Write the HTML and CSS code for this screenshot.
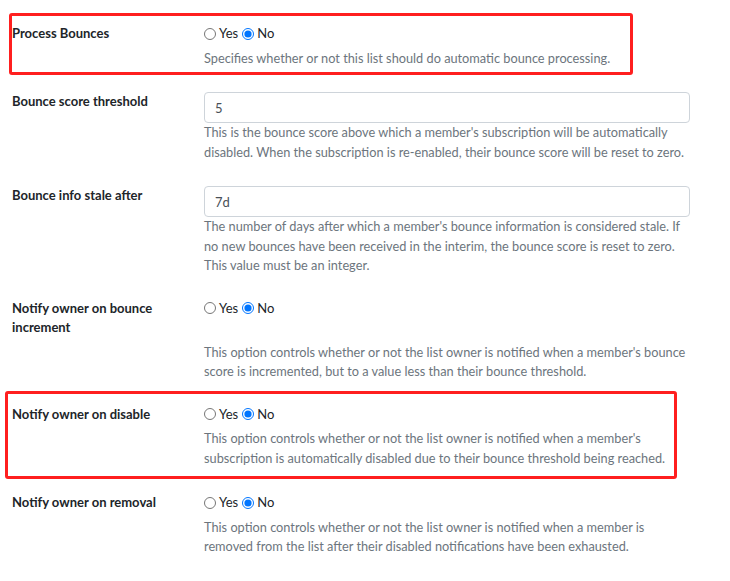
FILE: index.html
```html
<!DOCTYPE html>
<html>
<head>
<meta charset="utf-8">
<link rel="stylesheet" href="styles.css">
</head>
<body>
<div class="form">
  <div class="row">
    <div class="label">Process Bounces</div>
    <div class="control">
      <label class="radio"><input type="radio" name="r1"> Yes</label>
      <label class="radio"><input type="radio" name="r1" checked> No</label>
    </div>
    <div class="help">Specifies whether or not this list should do automatic bounce processing.</div>
    <div class="mark mark1"></div>
  </div>
  <div class="row input-row">
    <div class="label">Bounce score threshold</div>
    <div class="control"><input class="text" type="text" value="5"></div>
    <div class="help tight">This is the bounce score above which a member's subscription will be automatically disabled. When the subscription is re-enabled, their bounce score will be reset to zero.</div>
  </div>
  <div class="row input-row">
    <div class="label">Bounce info stale after</div>
    <div class="control"><input class="text" type="text" value="7d"></div>
    <div class="help tight">The number of days after which a member's bounce information is considered stale. If no new bounces have been received in the interim, the bounce score is reset to zero. This value must be an integer.</div>
  </div>
  <div class="row">
    <div class="label">Notify owner on bounce increment</div>
    <div class="control">
      <label class="radio"><input type="radio" name="r4"> Yes</label>
      <label class="radio"><input type="radio" name="r4" checked> No</label>
    </div>
    <div class="help">This option controls whether or not the list owner is notified when a member's bounce score is incremented, but to a value less than their bounce threshold.</div>
  </div>
  <div class="row spaced">
    <div class="label">Notify owner on disable</div>
    <div class="control">
      <label class="radio"><input type="radio" name="r5"> Yes</label>
      <label class="radio"><input type="radio" name="r5" checked> No</label>
    </div>
    <div class="help">This option controls whether or not the list owner is notified when a member's subscription is automatically disabled due to their bounce threshold being reached.</div>
    <div class="mark mark2"></div>
  </div>
  <div class="row">
    <div class="label">Notify owner on removal</div>
    <div class="control">
      <label class="radio"><input type="radio" name="r6"> Yes</label>
      <label class="radio"><input type="radio" name="r6" checked> No</label>
    </div>
    <div class="help">This option controls whether or not the list owner is notified when a member is removed from the list after their disabled notifications have been exhausted.</div>
  </div>
</div>
</body>
</html>
```
FILE: styles.css
```css
html, body {
  margin: 0;
  padding: 0;
  background: #fff;
}
body {
  font-family: "Lato", "Noto Sans", sans-serif;
  font-size: 13px;
  line-height: 19.5px;
  color: #212529;
}
.form {
  padding: 24px 0 0 12px;
  width: 678px;
}
.row {
  position: relative;
  display: grid;
  grid-template-columns: 192px 486px;
  margin-bottom: 23px;
}
.row.spaced {
  margin-bottom: 25px;
}
.label {
  font-weight: bold;
  grid-column: 1;
  grid-row: 1;
  padding-right: 12px;
}
.input-row .label {
  padding-top: 1px;
}
.control {
  grid-column: 2;
  grid-row: 1;
  display: flex;
  align-items: center;
  height: 19.5px;
}
.input-row .control {
  height: auto;
}
.radio {
  display: inline-flex;
  align-items: center;
  margin-right: 4px;
}
.radio input {
  margin: 0 3px 0 0;
  width: 12px;
  height: 12px;
}
.text {
  box-sizing: border-box;
  width: 486px;
  height: 31px;
  border: 1px solid #ced4da;
  border-radius: 4px;
  padding: 0 10px;
  font: inherit;
  color: #495057;
  margin-top: 1px;
}
.help {
  grid-column: 2;
  grid-row: 2;
  color: #6c757d;
  margin-top: 5px;
  font-size: 12.75px;
}
.help.tight {
  margin-top: 0;
}
.mark {
  position: absolute;
  border: 3px solid #ff1f1f;
  border-radius: 3px;
  pointer-events: none;
}
.mark1 {
  left: -3px;
  top: -11px;
  width: 618px;
  height: 56px;
}
.mark2 {
  left: -7px;
  top: -14px;
  width: 666px;
  height: 82px;
}
```
